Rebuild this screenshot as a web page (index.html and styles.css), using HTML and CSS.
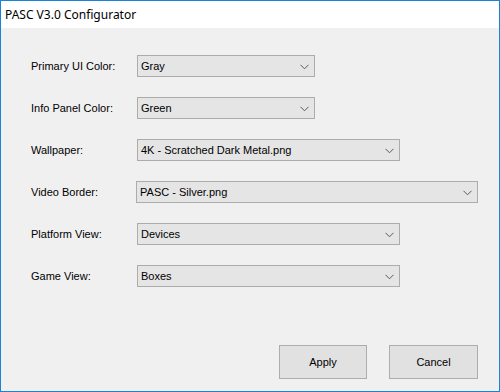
FILE: index.html
```html
<!DOCTYPE html>
<html>
<head>
<meta charset="utf-8">
<title>PASC V3.0 Configurator</title>
<link rel="stylesheet" href="styles.css">
</head>
<body>
<div class="window">
  <div class="titlebar">PASC V3.0 Configurator</div>
  <div class="client">
    <div class="form">
      <div class="row">
        <div class="label">Primary UI Color:</div>
        <div class="combo w-short"><span>Gray</span><svg class="chev" width="9" height="6" viewBox="0 0 9 6"><polyline points="0.5,0.8 4.5,4.8 8.5,0.8" fill="none" stroke="#5a5a5a" stroke-width="1"/></svg></div>
      </div>
      <div class="row">
        <div class="label">Info Panel Color:</div>
        <div class="combo w-short"><span>Green</span><svg class="chev" width="9" height="6" viewBox="0 0 9 6"><polyline points="0.5,0.8 4.5,4.8 8.5,0.8" fill="none" stroke="#5a5a5a" stroke-width="1"/></svg></div>
      </div>
      <div class="row">
        <div class="label">Wallpaper:</div>
        <div class="combo w-mid"><span>4K - Scratched Dark Metal.png</span><svg class="chev" width="9" height="6" viewBox="0 0 9 6"><polyline points="0.5,0.8 4.5,4.8 8.5,0.8" fill="none" stroke="#5a5a5a" stroke-width="1"/></svg></div>
      </div>
      <div class="row">
        <div class="label">Video Border:</div>
        <div class="combo w-long"><span>PASC - Silver.png</span><svg class="chev" width="9" height="6" viewBox="0 0 9 6"><polyline points="0.5,0.8 4.5,4.8 8.5,0.8" fill="none" stroke="#5a5a5a" stroke-width="1"/></svg></div>
      </div>
      <div class="row">
        <div class="label">Platform View:</div>
        <div class="combo w-mid"><span>Devices</span><svg class="chev" width="9" height="6" viewBox="0 0 9 6"><polyline points="0.5,0.8 4.5,4.8 8.5,0.8" fill="none" stroke="#5a5a5a" stroke-width="1"/></svg></div>
      </div>
      <div class="row">
        <div class="label">Game View:</div>
        <div class="combo w-mid"><span>Boxes</span><svg class="chev" width="9" height="6" viewBox="0 0 9 6"><polyline points="0.5,0.8 4.5,4.8 8.5,0.8" fill="none" stroke="#5a5a5a" stroke-width="1"/></svg></div>
      </div>
    </div>
    <div class="buttons">
      <div class="btn">Apply</div>
      <div class="btn btn-wide">Cancel</div>
    </div>
  </div>
</div>
</body>
</html>
```
FILE: styles.css
```css
html, body {
  margin: 0;
  padding: 0;
  background: #f0f0f0;
}
.window {
  width: 500px;
  height: 392px;
  box-sizing: border-box;
  border: 1px solid #1883d7;
  display: flex;
  flex-direction: column;
  background: #f0f0f0;
  font-family: "Liberation Sans", Arial, sans-serif;
  font-size: 11px;
  color: #000;
}
.titlebar {
  height: 27px;
  background: #ffffff;
  font-family: "Segoe UI", "Noto Sans", "Open Sans", sans-serif;
  font-size: 12px;
  line-height: 27px;
  padding-left: 4px;
  color: #000;
}
.client {
  flex: 1;
  display: flex;
  flex-direction: column;
  justify-content: space-between;
  padding: 27px 21px 12px 30px;
}
.form {
  display: flex;
  flex-direction: column;
  gap: 20px;
}
.row {
  display: flex;
  align-items: center;
  height: 22px;
}
.label {
  width: 106px;
}
.combo {
  box-sizing: border-box;
  height: 22px;
  background: #e5e5e5;
  border: 1px solid #acacac;
  display: flex;
  align-items: center;
  justify-content: space-between;
  padding: 0 5px 0 3px;
}
.chev {
  display: block;
  margin-top: 1px;
}
.w-short { width: 178px; }
.w-mid { width: 263px; }
.w-long { width: 345px; }
.buttons {
  display: flex;
  justify-content: flex-end;
  gap: 22px;
}
.btn {
  box-sizing: border-box;
  width: 88px;
  height: 34px;
  background: #e1e1e1;
  border: 1px solid #adadad;
  display: flex;
  align-items: center;
  justify-content: center;
}
.btn-wide { width: 89px; }
```
